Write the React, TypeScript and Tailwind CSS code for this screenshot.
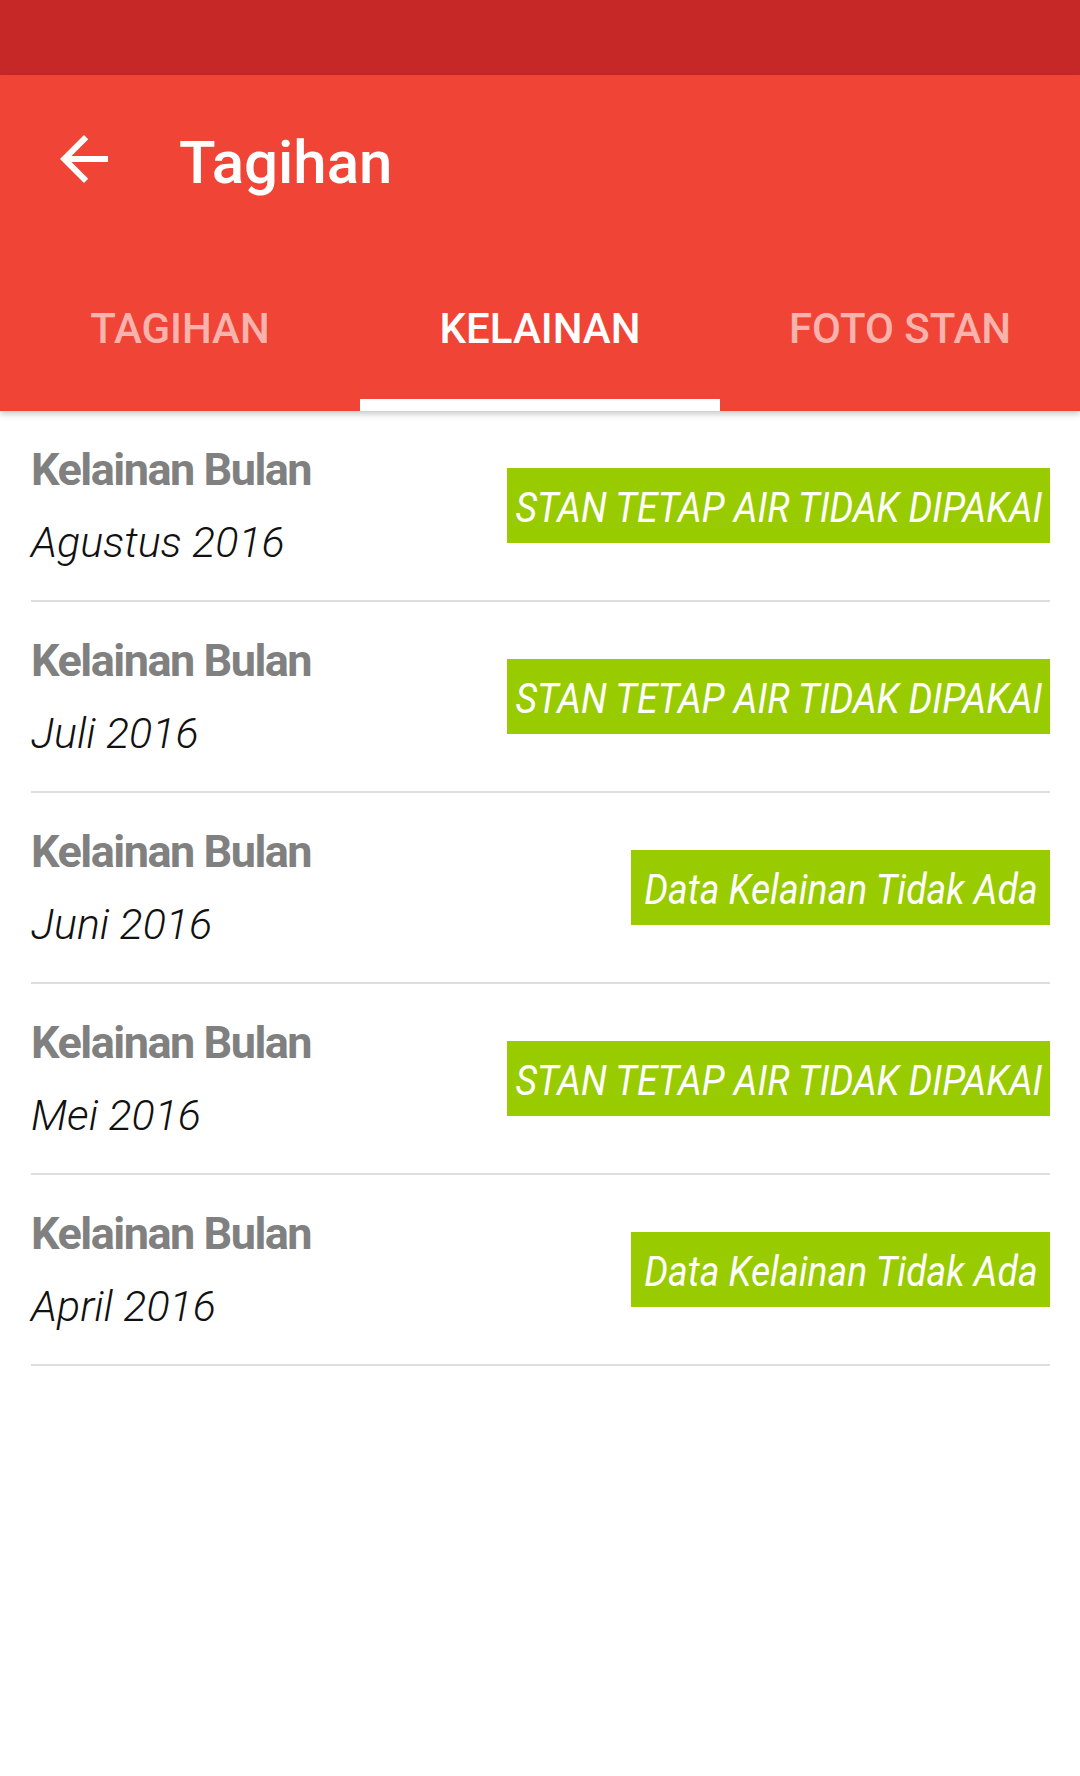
import React from "react";

type Item = { month: string; status: string; wide: boolean };

const items: Item[] = [
  { month: "Agustus 2016", status: "STAN TETAP AIR TIDAK DIPAKAI", wide: true },
  { month: "Juli 2016", status: "STAN TETAP AIR TIDAK DIPAKAI", wide: true },
  { month: "Juni 2016", status: "Data Kelainan Tidak Ada", wide: false },
  { month: "Mei 2016", status: "STAN TETAP AIR TIDAK DIPAKAI", wide: true },
  { month: "April 2016", status: "Data Kelainan Tidak Ada", wide: false },
];

function BackArrow() {
  return (
    <svg width="72" height="72" viewBox="0 0 24 24" fill="white">
      <path d="M20 11H7.83l5.59-5.59L12 4l-8 8 8 8 1.41-1.41L7.83 13H20v-2z" />
    </svg>
  );
}

function Tab({ label, active }: { label: string; active?: boolean }) {
  return (
    <div className="relative flex-1 flex items-center justify-center h-[168px]">
      <span
        className={
          "text-[42px] leading-none font-medium pt-[4px] " +
          (active ? "text-white" : "text-white/60")
        }
      >
        {label}
      </span>
      {active && <div className="absolute bottom-0 left-0 right-0 h-[12px] bg-white" />}
    </div>
  );
}

export default function App() {
  return (
    <div
      className="w-[1080px] min-h-[1776px] bg-white"
      style={{ fontFamily: "Roboto, 'Noto Sans', sans-serif" }}
    >
      <div className="h-[75px] bg-[#c62828]" />
      <div className="bg-[#f04437] shadow-[0_3px_6px_rgba(0,0,0,0.22)] relative z-10">
        <div className="h-[168px] flex items-center pl-[48px]">
          <BackArrow />
          <span className="ml-[59px] text-[60px] leading-none font-medium text-white pt-[7px]">
            Tagihan
          </span>
        </div>
        <div className="flex">
          <Tab label="TAGIHAN" />
          <Tab label="KELAINAN" active />
          <Tab label="FOTO STAN" />
        </div>
      </div>
      <div className="pl-[31px] pr-[30px]">
        {items.map((it, i) => (
          <div
            key={i}
            className="h-[191px] border-b-2 border-[#dedede] flex items-center justify-between"
          >
            <div className="flex flex-col">
              <span className="text-[45px] leading-[70px] font-bold text-[#808080] tracking-[-1.5px]">
                Kelainan Bulan
              </span>
              <span className="text-[43px] leading-[70px] italic font-light text-[#111111] pt-[2px]">
                {it.month}
              </span>
            </div>
            <div
              className={
                "h-[75px] bg-[#99cc00] flex items-center justify-center overflow-visible " +
                (it.wide ? "w-[543px]" : "w-[419px]")
              }
            >
              <span className="text-[42px] leading-none italic text-white whitespace-nowrap scale-x-[0.89] pt-[4px]">
                {it.status}
              </span>
            </div>
          </div>
        ))}
      </div>
    </div>
  );
}
